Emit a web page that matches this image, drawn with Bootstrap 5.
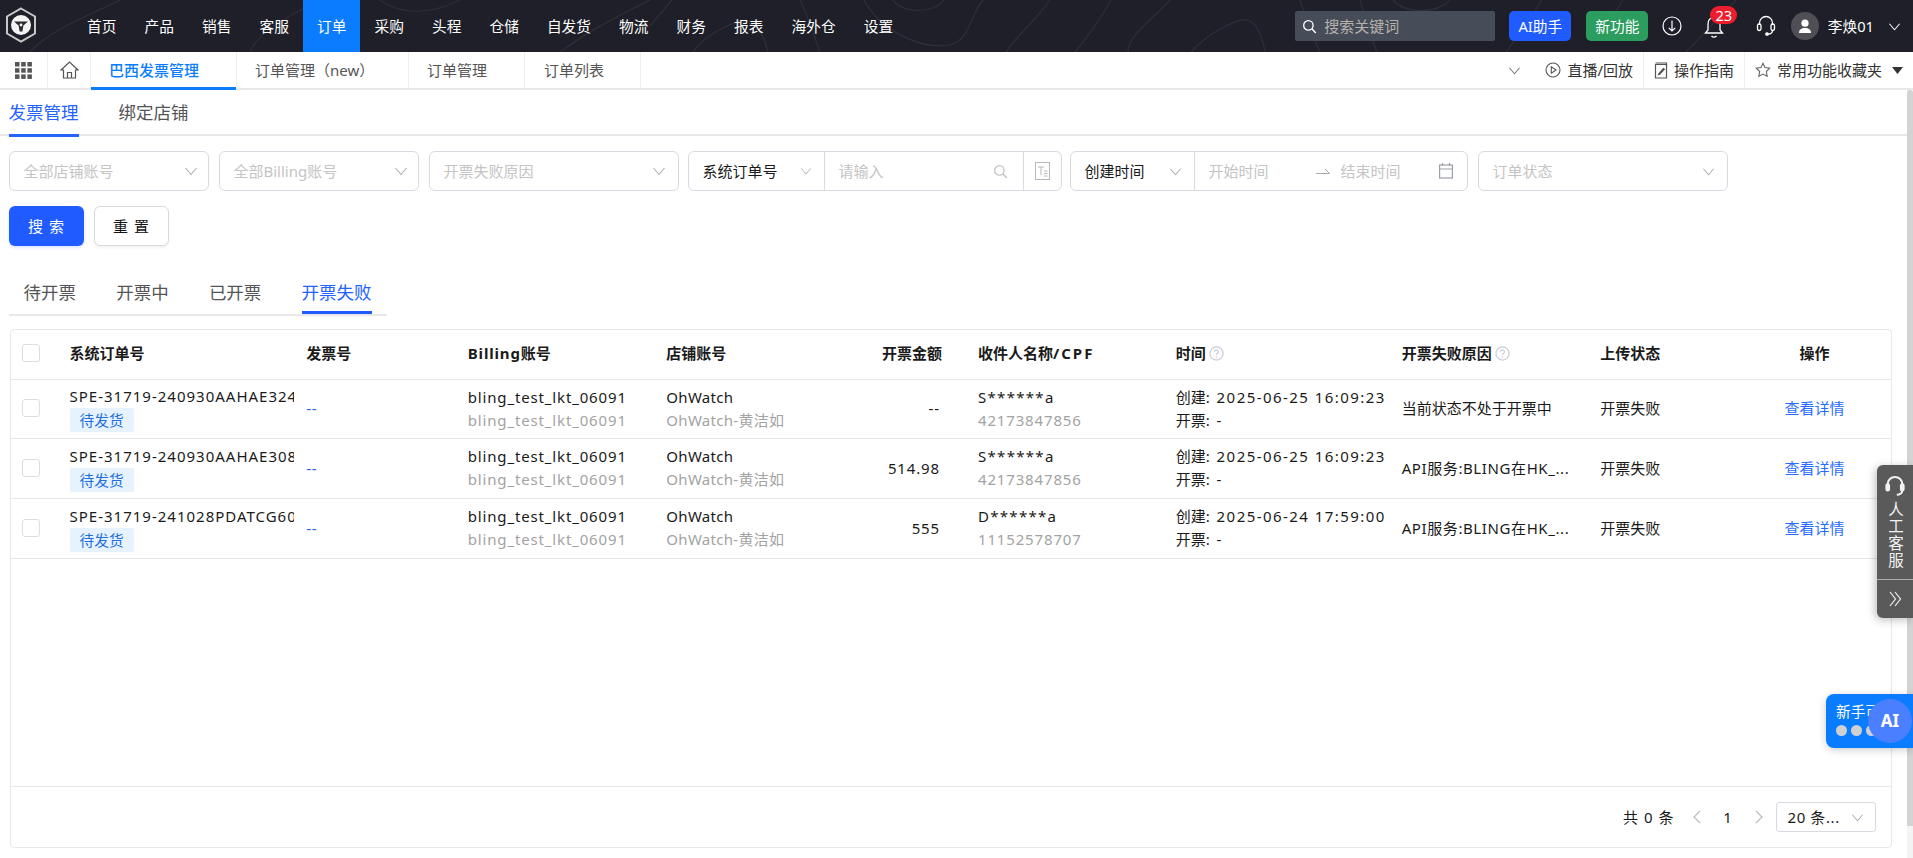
<!DOCTYPE html>
<html lang="zh-CN">
<head>
<meta charset="utf-8">
<title>巴西发票管理</title>
<link href="https://cdn.jsdelivr.net/npm/bootstrap@5.3.0/dist/css/bootstrap.min.css" rel="stylesheet">
<style>
html,body{height:100%;overflow:hidden}
body{font-family:"Noto Sans","Noto Sans CJK SC",sans-serif;font-size:15px;color:#1a1a1a;display:flex;flex-direction:column;background:#fff}
.top-bar{height:52px;background:#1e1f29;position:relative;flex:none;padding-left:73px;color:#fff;font-size:14.7px}
.contour{position:absolute;left:0;top:0;width:1913px;height:52px;pointer-events:none}
.logo-mark{position:absolute;left:4px;top:7px}
.main-nav{position:relative;list-style:none;margin:0;padding:0}
.main-nav a{display:block;height:52px;line-height:52px;padding:0 14.05px;color:#fff;text-decoration:none;white-space:nowrap}
.main-nav a.on{background:#0a7cff}
.top-tools{position:relative;margin-left:auto;height:52px}
.find-box{width:200px;height:30px;background:#474c59;border-radius:2px;color:#b5b2ad;padding-left:7px;gap:7px;margin-right:14px;font-size:15px}
.pill{height:30px;line-height:30px;padding:0;width:62px;text-align:center;border-radius:5px;color:#fff}
.pill-ai{background:#1f5bff;margin-right:15px}
.pill-new{background:#2a9d5f;margin-right:14px}
.bell-wrap{position:relative;width:24px;height:24px;margin-left:22px}
.bell-count{position:absolute;left:6px;top:-8px;width:27px;height:18px;line-height:18px;border-radius:9px;background:#ee1d2e;color:#fff;text-align:center}
.head-ico{margin-left:27.5px}
.avatar-dot{width:28px;height:28px;border-radius:50%;background:#4f4f55;margin:0 9px 0 15px}
.who{margin-right:14px}
.chev-top{margin-right:12px}
.tab-bar{height:38px;border-bottom:2px solid #e8e8e8;flex:none;background:#fff;color:#555}
.tab-cell{height:36px;border-right:1px solid #eee}
.cell-grid{width:48px}
.cell-home{width:43px}
.page-tab{line-height:36px;text-decoration:none;color:#555;white-space:nowrap;display:block}
.pt1{width:146px;padding-left:18px;color:#0a7cff;position:relative;font-weight:500}
.pt1::after{content:"";position:absolute;left:0;right:0;bottom:-2px;height:3px;background:#0a7cff}
.pt2{width:172px;padding-left:18px}
.pt3{width:116px;padding-left:18px}
.pt4{width:116px;padding-left:19px}
.bar-right{margin-left:auto;color:#333;height:36px}
.bar-more{margin-right:14px;color:#777}
.bar-item{height:36px;gap:6px;padding:0 10px;border-right:1px solid #eee}
.bar-item:last-child{border-right:0;padding-right:10px}
.work-row{flex:1;min-height:0;display:flex}
.work-main{flex:1;min-width:0;display:flex;flex-direction:column;padding:0 16.5px 10px 8.5px}
.sb-track{width:6px;flex:none;background:#f3f3f3;position:relative}
.sb-thumb{height:736px;background:#d3d3d3;border-radius:3px 3px 0 0}
.sub-tabs{height:46px;border-bottom:2px solid #e8e8e8;margin:0 -16.5px 0 -8.5px;padding-left:8.5px;gap:40px;flex:none}
.sub-tab{display:block;height:46px;line-height:45px;font-size:17.5px;color:#555;text-decoration:none;position:relative}
.sub-tab.on{color:#2563ff}
.sub-tab.on::after{content:"";position:absolute;left:0;right:0;bottom:-1px;height:3px;background:#2563ff}
.filter-row{margin-top:15px;flex:none}
.fbox{height:40px;border:1px solid #d9d9e2;border-radius:6px;color:#c4c4c4;padding:0 12px 0 14px;background:#fff;white-space:nowrap}
.fw200{width:200px;margin-right:10px;padding-right:10px}
.fw250{width:250px;margin-right:9px}
.fg-order{width:374px;margin-right:8px}
.fg-date{width:398px;margin-right:10px}
.fw-status{width:250px}
.seg{height:100%;align-items:center;display:flex;justify-content:space-between}
.seg-sel{color:#1a1a1a;border-right:1px solid #d9d9e2}
.sel-a{width:136px;padding:0 12px 0 14px}
.sel-b{width:124px;padding:0 12px 0 14px}
.seg-in{width:199px;padding:0 15px 0 14px;border-right:1px solid #d9d9e2}
.seg-ico{flex:1;justify-content:center}
.fg-order,.fg-date{padding:0}
.seg-range{flex:1;padding:0 14px;justify-content:flex-start}
.range-arrow{margin:0 11px 0 47px}
.range-cal{margin-left:auto}
.chev-soft{color:#adadad}
.act-row{margin-top:15px;gap:10px;flex:none}
.btn-go{width:75px;height:40px;padding:0;background:#1f5bff;border:0;color:#fff;border-radius:6px;font-size:15px;word-spacing:2px;box-shadow:0 2px 3px rgba(31,91,255,.15)}
.btn-clear{width:75px;height:40px;padding:0;background:#fff;border:1px solid #d9d9d9;color:#111;border-radius:6px;font-size:15px;word-spacing:2px;box-shadow:0 2px 3px rgba(0,0,0,.05)}
.state-tabs{margin-top:26px;height:44px;border-bottom:2px solid #e8e8e8;width:378px;padding-left:15px;gap:40.2px;flex:none}
.state-tab{display:block;height:42px;line-height:41px;font-size:17.5px;color:#555;text-decoration:none;position:relative}
.state-tab.on{color:#2563ff}
.state-tab.on::after{content:"";position:absolute;left:0;right:0;bottom:0;height:3px;background:#1f5bff}
.grid-card{margin-top:13px;margin-left:1px;flex:1;min-height:0;border:1px solid #e8e8e8;border-radius:4px;display:flex;flex-direction:column;width:1882px}
.grid-body{flex:1;min-height:0;overflow:hidden}
.order-grid{table-layout:fixed;width:1881px;margin:0;--bs-table-color:#1a1a1a;--bs-table-border-color:#e8e8e8}
.order-grid th,.order-grid td{padding:0 0 0 12px;vertical-align:middle;border-bottom:1px solid #e8e8e8;white-space:nowrap}
.order-grid thead th{height:49px;font-weight:700;padding-bottom:2px}
.order-grid tbody td{height:60px;line-height:23px}
.order-grid tbody tr:first-child td{height:59px}
.c0{width:47px}.c1{width:236.5px}.c2{width:161.5px}.c3{width:198.5px}.c4{width:185.5px}.c5{width:126px}.c6{width:197.7px}.c7{width:225.8px}.c8{width:198.5px}.c9{width:172px}.c10{width:131px}
.check-sq{display:block;width:18px;height:18px;border:1px solid #ddd;border-radius:3px;background:#fff;margin:-1px 0 0 -1px}
.clip-cell{overflow:hidden}
.status-tag{display:inline-block;height:24px;line-height:24px;padding:0 10px;background:#e6f3ff;color:#1f6fe0;border-radius:2px;vertical-align:top;font-size:14.7px}
.order-no{height:23px;line-height:22px;letter-spacing:1px}
.muted-line{color:#a3a3a3}
.lat{letter-spacing:.85px}
.lat-mask{letter-spacing:1.3px}
.lat-digit{letter-spacing:.85px}
.lat-soft{letter-spacing:.3px}
.lat-time{letter-spacing:1.45px}
.lat-reason{letter-spacing:.6px}
.lat-h{letter-spacing:.85px}
.lat-cpf{letter-spacing:2px}
.dash-link{color:#1f5bff;text-decoration:none;letter-spacing:.85px}
.amount{text-align:right;padding-right:26px!important}
.amount-h{text-align:right;padding-right:24px!important}
.op-cell{text-align:center;padding:0 23px 0 0!important}
.order-grid thead .op-cell{padding-bottom:2px!important}
.op-link{color:#2a6cff;text-decoration:none}
.hint-i{vertical-align:-2px;margin-left:3px}
.grid-foot{height:61px;border-top:1px solid #e8e8e8;flex:none;padding-right:15px}
.pg-total{margin-right:17px;letter-spacing:1px}
.pg-num{width:52px;text-align:center}
.pg-size{width:100px;height:30px;border:1px solid #d9d9e2;border-radius:3px;padding:0 11px;margin-left:12px;letter-spacing:.6px}
.svc-float{position:absolute;right:0;top:465px;width:36px;height:153px;background:#5a5a5a;border-radius:6px 0 0 6px;color:#f2f2f2;box-shadow:-2px 2px 8px rgba(0,0,0,.25);text-align:center;font-size:15.5px}
.svc-top{height:115px;padding-top:10px;border-bottom:1px solid #aaa}
.svc-top svg{display:block;margin:0 auto}
.svc-word{writing-mode:vertical-rl;text-orientation:upright;letter-spacing:1.5px;line-height:16px;margin:3px auto 0;height:70px;width:16px}
.svc-more{height:37px}
.guide-float{position:absolute;right:0;top:694px;width:87px;height:54px;background:#0a7cff;border-radius:8px 0 0 8px;box-shadow:0 2px 8px rgba(0,0,0,.2);color:#fff;padding:6px 0 0 10px;overflow:hidden;white-space:nowrap;font-size:14.7px}
.guide-dots{gap:4px;margin-top:3px}
.guide-dots i{display:block;width:11px;height:11px;border-radius:50%;background:#d0d0d0}
.ai-ball{position:absolute;left:1868px;top:699px;width:44px;height:44px;border-radius:50%;background:#4a80ff;color:#fff;font-weight:700;font-size:17px;line-height:44px;text-align:center}
</style>
</head>
<body>
<svg width="0" height="0" class="position-absolute">
<symbol id="chev" viewBox="0 0 14 14"><path d="M1.500 4 7 10.500 12.500 4" fill="none" stroke="currentColor" stroke-width="1.100"/></symbol>
<symbol id="hint" viewBox="0 0 16 16"><circle cx="8" cy="8" r="7" fill="none" stroke="#c9ccd6" stroke-width="1.300"/><path d="M5.900 6.200A2.100 2.100 0 1 1 9 8c-.7.4-1 .8-1 1.600" fill="none" stroke="#c9ccd6" stroke-width="1.200"/><circle cx="8" cy="11.600" r=".8" fill="#c9ccd6"/></symbol>
<symbol id="mag" viewBox="0 0 16 16"><circle cx="6.800" cy="6.800" r="5" fill="none" stroke="currentColor" stroke-width="1.400"/><path d="m10.500 10.500 4.200 4.400" stroke="currentColor" stroke-width="1.600" fill="none"/></symbol>
</svg>

<header class="top-bar d-flex align-items-center">
  <svg class="contour" viewBox="0 0 1913 52" fill="none" stroke="#2e2f39" stroke-width="1.200">
    <path d="M650 26 672 0M693 52c7-12 37-32 52-30 15 3 20 18 23 30M800 0c10 20 15 40 20 52M864 0c16 30 56 50 86 45 20-5 20-30 33-45M893 0c10 14 40 14 51 0M1050 0c-15 22-43 45-43 52M1111 0c-12 22-30 45-36 52M1170 0c-18 20-42 35-42 52M1191 52c20-22 49-34 57-32 12 5 16 25 17 32"/>
    <path d="M1300 0c6 16 12 36 20 52M1360 0c5 18 10 36 17 52M1393 0c12 14 44 14 57 0M1542 0c-12 18-24 36-36 52M1623 0c-8 12-14 22-20 30M1736 0c-20 20-34 36-50 52"/>
    <path d="M250 52c10-22 40-37 70-52M380 0c20 15 50 15 80 0M560 52c30-22 60-37 90-52M30 52C50 30 90 15 120 0"/>
  </svg>
  <svg class="logo-mark" width="34" height="36" viewBox="0 0 34 36">
    <path d="M17 1.500 31 9.500v17L17 34.500 3 26.500v-17z" fill="none" stroke="#c8c8c8" stroke-width="2"/>
    <circle cx="17" cy="18" r="10" fill="#f4f4f4"/>
    <path d="M10 14.500h14l-4.600 4-1 6h-2.800l-1-6z" fill="#2a2a30"/>
    <circle cx="17" cy="18" r="1.400" fill="#f4f4f4"/>
  </svg>
  <ul class="main-nav d-flex">
    <li><a href="#">首页</a></li><li><a href="#">产品</a></li><li><a href="#">销售</a></li><li><a href="#">客服</a></li><li><a class="on" href="#">订单</a></li><li><a href="#">采购</a></li><li><a href="#">头程</a></li><li><a href="#">仓储</a></li><li><a href="#">自发货</a></li><li><a href="#">物流</a></li><li><a href="#">财务</a></li><li><a href="#">报表</a></li><li><a href="#">海外仓</a></li><li><a href="#">设置</a></li>
  </ul>
  <div class="top-tools d-flex align-items-center">
    <div class="find-box d-flex align-items-center">
      <svg width="15" height="15" class="text-white"><use href="#mag"/></svg><span>搜索关键词</span>
    </div>
    <div class="pill pill-ai">AI助手</div>
    <div class="pill pill-new">新功能</div>
    <svg width="20" height="20" viewBox="0 0 20 20" fill="none" stroke="#fff" stroke-width="1.200"><circle cx="10" cy="10" r="9"/><path d="M10 4.500V15M6.800 11.800 10 15l3.200-3.200"/></svg>
    <div class="bell-wrap">
      <svg width="20" height="24" viewBox="0 0 20 24" fill="none" stroke="#fff" stroke-width="1.300"><path d="M10 2.500c-4 0-6 3-6 6.500v6l-2.500 3h17L16 15V9c0-3.500-2-6.500-6-6.500ZM7.500 21c1.500 1.600 3.500 1.600 5 0"/></svg>
      <span class="bell-count">23</span>
    </div>
    <svg class="head-ico" width="20" height="22" viewBox="0 0 20 22" fill="none" stroke="#fff" stroke-width="1.300"><path d="M3.500 10V8a6.500 6.500 0 0 1 13 0v2"/><rect x="1.500" y="9" width="3.500" height="6.500" rx="1.700"/><rect x="15" y="9" width="3.500" height="6.500" rx="1.700"/><path d="M16.500 15.500c0 2.500-2 3.500-4.500 3.500"/><circle cx="11" cy="19" r="1.200" fill="#fff"/></svg>
    <div class="avatar-dot d-flex align-items-center justify-content-center">
      <svg width="14" height="15" viewBox="0 0 14 15" fill="#fff"><circle cx="7" cy="4.200" r="3.600"/><path d="M1 14c0-3.600 2.500-5 6-5s6 1.400 6 5z"/></svg>
    </div>
    <span class="who">李焕01</span>
    <svg width="13" height="13" class="text-white chev-top"><use href="#chev"/></svg>
  </div>
</header>

<nav class="tab-bar d-flex align-items-center">
  <div class="tab-cell cell-grid d-flex align-items-center justify-content-center">
    <svg width="17" height="17" viewBox="0 0 17 17" fill="#555"><rect width="4.500" height="4.500"/><rect x="6.200" width="4.500" height="4.500"/><rect x="12.400" width="4.500" height="4.500"/><rect y="6.200" width="4.500" height="4.500"/><rect x="6.200" y="6.200" width="4.500" height="4.500"/><rect x="12.400" y="6.200" width="4.500" height="4.500"/><rect y="12.400" width="4.500" height="4.500"/><rect x="6.200" y="12.400" width="4.500" height="4.500"/><rect x="12.400" y="12.400" width="4.500" height="4.500"/></svg>
  </div>
  <div class="tab-cell cell-home d-flex align-items-center justify-content-center">
    <svg width="19" height="18" viewBox="0 0 19 18" fill="none" stroke="#555" stroke-width="1.200"><path d="M1 9 9.500 1 18 9h-2.500v8h-12V9zM7.500 17v-5.500h4V17"/></svg>
  </div>
  <a class="page-tab pt1 tab-cell" href="#">巴西发票管理</a>
  <a class="page-tab pt2 tab-cell" href="#">订单管理（new）</a>
  <a class="page-tab pt3 tab-cell" href="#">订单管理</a>
  <a class="page-tab pt4 tab-cell" href="#">订单列表</a>
  <div class="bar-right d-flex align-items-center">
    <svg width="13" height="13" class="bar-more"><use href="#chev"/></svg>
    <div class="bar-item d-flex align-items-center">
      <svg width="16" height="16" viewBox="0 0 16 16" fill="none" stroke="#555" stroke-width="1.100"><circle cx="8" cy="8" r="7"/><path d="M6.300 4.800v6.400L11 8z"/></svg><span>直播/回放</span>
    </div>
    <div class="bar-item d-flex align-items-center">
      <svg width="14" height="17" viewBox="0 0 14 17" fill="none" stroke="#555" stroke-width="1.200"><path d="M1.500 2.500h11v13.500h-11z"/><path d="M1.500 1h11v2.500M9.500 6.500 5 11.500l-.5 1 1.200-.3 4.600-5z"/></svg><span>操作指南</span>
    </div>
    <div class="bar-item d-flex align-items-center">
      <svg width="16" height="16" viewBox="0 0 16 16" fill="none" stroke="#666" stroke-width="1.100"><path d="m8 1.300 2 4.300 4.700.6-3.400 3.300.9 4.700L8 12l-4.200 2.200.9-4.700L1.300 6.200 6 5.600z"/></svg><span>常用功能收藏夹</span>
      <svg width="11" height="7" viewBox="0 0 11 7" fill="#333" class="ms-1"><path d="M0 0h11L5.500 7z"/></svg>
    </div>
  </div>
</nav>

<div class="work-row">
  <main class="work-main">
    <div class="sub-tabs d-flex">
      <a class="sub-tab on" href="#">发票管理</a>
      <a class="sub-tab" href="#">绑定店铺</a>
    </div>

    <div class="filter-row d-flex">
      <div class="fbox fw200 d-flex align-items-center justify-content-between"><span>全部店铺账号</span><svg width="14" height="14" class="chev-soft"><use href="#chev"/></svg></div>
      <div class="fbox fw200 d-flex align-items-center justify-content-between"><span>全部Billing账号</span><svg width="14" height="14" class="chev-soft"><use href="#chev"/></svg></div>
      <div class="fbox fw250 d-flex align-items-center justify-content-between"><span>开票失败原因</span><svg width="14" height="14" class="chev-soft"><use href="#chev"/></svg></div>
      <div class="fbox fg-order d-flex">
        <div class="seg seg-sel sel-a"><span>系统订单号</span><svg width="12" height="12" class="chev-soft"><use href="#chev"/></svg></div>
        <div class="seg seg-in"><span>请输入</span><svg width="15" height="15"><use href="#mag"/></svg></div>
        <div class="seg seg-ico"><svg width="15" height="18" viewBox="0 0 15 18" fill="none" stroke="#b8b8b8"><rect x=".5" y=".5" width="14" height="17"/><path d="M3 5h6M6 5v8M9 9h3.500M9 11.500h3.500M9 14h3.500"/></svg></div>
      </div>
      <div class="fbox fg-date d-flex">
        <div class="seg seg-sel sel-b"><span>创建时间</span><svg width="13" height="13" class="chev-soft"><use href="#chev"/></svg></div>
        <div class="seg seg-range"><span>开始时间</span><svg class="range-arrow" width="14" height="8" viewBox="0 0 14 8" fill="none" stroke="#aaa"><path d="M0 6.500h13.500L9 2"/></svg><span>结束时间</span><svg class="range-cal" width="14" height="16" viewBox="0 0 14 16" fill="none" stroke="#9b9fa8" stroke-width="1.200"><rect x=".6" y="2" width="12.800" height="13"/><path d="M.6 6h12.800M3.500 0v3M10.500 0v3"/></svg></div>
      </div>
      <div class="fbox fw-status d-flex align-items-center justify-content-between"><span>订单状态</span><svg width="13" height="13" class="chev-soft"><use href="#chev"/></svg></div>
    </div>

    <div class="act-row d-flex">
      <button class="btn btn-go" type="button">搜 索</button>
      <button class="btn btn-clear" type="button">重 置</button>
    </div>

    <div class="state-tabs d-flex">
      <a class="state-tab" href="#">待开票</a>
      <a class="state-tab" href="#">开票中</a>
      <a class="state-tab" href="#">已开票</a>
      <a class="state-tab on" href="#">开票失败</a>
    </div>

    <section class="grid-card">
      <div class="grid-body">
        <table class="table order-grid">
          <colgroup><col class="c0"><col class="c1"><col class="c2"><col class="c3"><col class="c4"><col class="c5"><col class="c6"><col class="c7"><col class="c8"><col class="c9"><col class="c10"></colgroup>
          <thead>
            <tr>
              <th><span class="check-sq"></span></th><th>系统订单号</th><th>发票号</th><th><span class="lat-h">Billing</span>账号</th><th>店铺账号</th><th class="amount-h">开票金额</th><th>收件人名称<span class="lat-cpf">/CPF</span></th>
              <th>时间<svg class="hint-i" width="15" height="15"><use href="#hint"/></svg></th>
              <th>开票失败原因<svg class="hint-i" width="15" height="15"><use href="#hint"/></svg></th>
              <th>上传状态</th><th class="op-cell">操作</th>
            </tr>
          </thead>
          <tbody>
            <tr>
              <td><span class="check-sq"></span></td>
              <td class="clip-cell"><div class="order-no">SPE-31719-240930AAHAE324</div><span class="status-tag">待发货</span></td>
              <td><a class="dash-link" href="#">--</a></td>
              <td class="lat">bling_test_lkt_06091<div class="muted-line">bling_test_lkt_06091</div></td>
              <td class="lat-soft">OhWatch<div class="muted-line">OhWatch-黄洁如</div></td>
              <td class="amount lat">--</td>
              <td class="lat-mask">S******a<div class="muted-line lat-digit">42173847856</div></td>
              <td>创建<span class="lat-time">: 2025-06-25 16:09:23</span><div>开票<span class="lat-time">: -</span></div></td>
              <td>当前状态不处于开票中</td>
              <td>开票失败</td>
              <td class="op-cell"><a class="op-link" href="#">查看详情</a></td>
            </tr>
            <tr>
              <td><span class="check-sq"></span></td>
              <td class="clip-cell"><div class="order-no">SPE-31719-240930AAHAE308</div><span class="status-tag">待发货</span></td>
              <td><a class="dash-link" href="#">--</a></td>
              <td class="lat">bling_test_lkt_06091<div class="muted-line">bling_test_lkt_06091</div></td>
              <td class="lat-soft">OhWatch<div class="muted-line">OhWatch-黄洁如</div></td>
              <td class="amount lat">514.98</td>
              <td class="lat-mask">S******a<div class="muted-line lat-digit">42173847856</div></td>
              <td>创建<span class="lat-time">: 2025-06-25 16:09:23</span><div>开票<span class="lat-time">: -</span></div></td>
              <td class="lat-reason">API服务:BLING在HK_...</td>
              <td>开票失败</td>
              <td class="op-cell"><a class="op-link" href="#">查看详情</a></td>
            </tr>
            <tr>
              <td><span class="check-sq"></span></td>
              <td class="clip-cell"><div class="order-no">SPE-31719-241028PDATCG60</div><span class="status-tag">待发货</span></td>
              <td><a class="dash-link" href="#">--</a></td>
              <td class="lat">bling_test_lkt_06091<div class="muted-line">bling_test_lkt_06091</div></td>
              <td class="lat-soft">OhWatch<div class="muted-line">OhWatch-黄洁如</div></td>
              <td class="amount lat">555</td>
              <td class="lat-mask">D******a<div class="muted-line lat-digit">11152578707</div></td>
              <td>创建<span class="lat-time">: 2025-06-24 17:59:00</span><div>开票<span class="lat-time">: -</span></div></td>
              <td class="lat-reason">API服务:BLING在HK_...</td>
              <td>开票失败</td>
              <td class="op-cell"><a class="op-link" href="#">查看详情</a></td>
            </tr>
          </tbody>
        </table>
      </div>
      <footer class="grid-foot d-flex align-items-center justify-content-end">
        <span class="pg-total">共 0 条</span>
        <svg width="10" height="14" viewBox="0 0 10 14" fill="none" stroke="#bbb" stroke-width="1.200"><path d="M8 1 2 7l6 6"/></svg>
        <span class="pg-num">1</span>
        <svg width="10" height="14" viewBox="0 0 10 14" fill="none" stroke="#bbb" stroke-width="1.200"><path d="m2 1 6 6-6 6"/></svg>
        <div class="pg-size d-flex align-items-center justify-content-between"><span>20 条...</span><svg width="13" height="13" class="chev-soft"><use href="#chev"/></svg></div>
      </footer>
    </section>
  </main>
  <div class="sb-track"><div class="sb-thumb"></div></div>
</div>

<aside class="svc-float">
  <div class="svc-top">
    <svg width="20" height="22" viewBox="0 0 22 24" fill="none" stroke="#f2f2f2" stroke-width="2.200"><path d="M3 12V10a8 8 0 0 1 16 0v2"/><rect x="1.500" y="10" width="3" height="7" rx="1.500" fill="#f2f2f2"/><rect x="17.500" y="10" width="3" height="7" rx="1.500" fill="#f2f2f2"/><path d="M19 17c0 3-3 4.500-6 4.500"/></svg>
    <div class="svc-word">人工客服</div>
  </div>
  <div class="svc-more d-flex align-items-center justify-content-center">
    <svg width="13" height="16" viewBox="0 0 13 16" fill="none" stroke="#f2f2f2" stroke-width="1.200"><path d="m1 1 5.500 7L1 15M6 1l5.500 7L6 15"/></svg>
  </div>
</aside>
<aside class="guide-float">
  <div>新手可</div>
  <div class="guide-dots d-flex"><i></i><i></i><i></i></div>
</aside>
<div class="ai-ball">AI</div>
<script src="https://cdn.jsdelivr.net/npm/bootstrap@5.3.0/dist/js/bootstrap.bundle.min.js"></script>
</body>
</html>
